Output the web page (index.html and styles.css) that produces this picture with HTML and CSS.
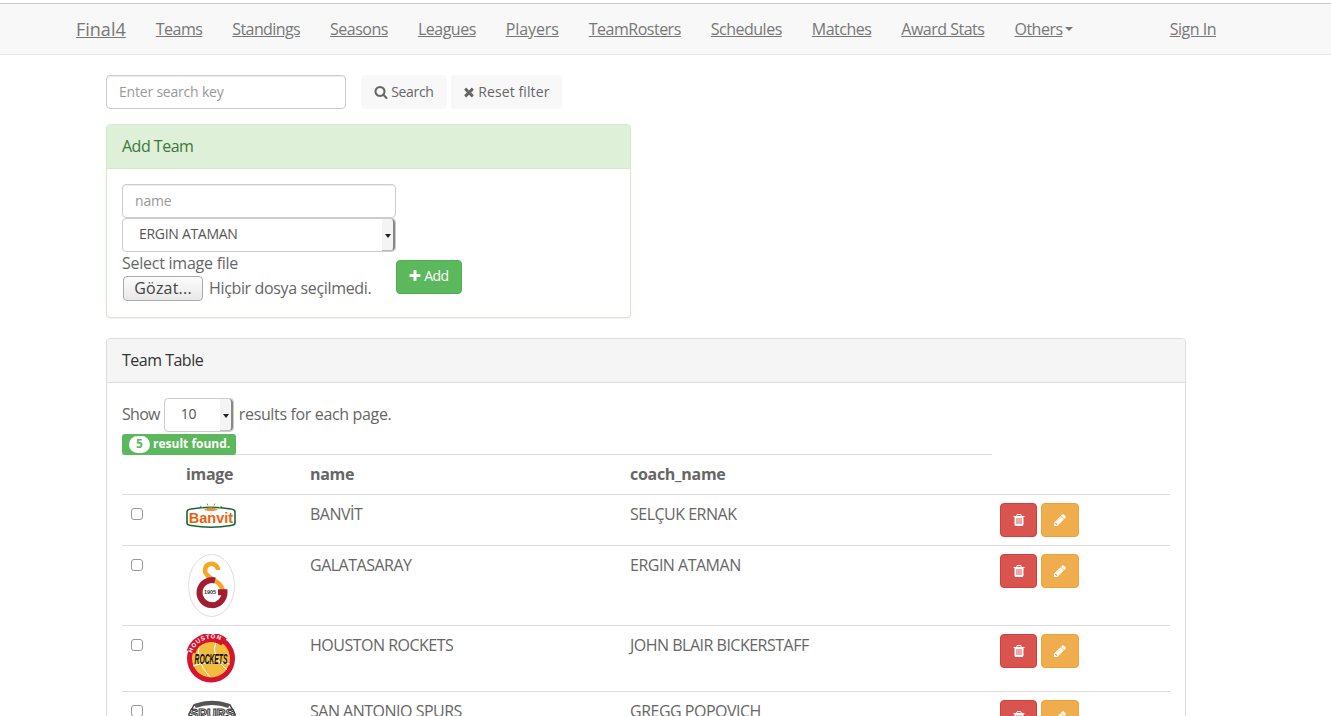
FILE: index.html
```html
<!DOCTYPE html>
<html lang="en">
<head>
    <meta charset="UTF-8">
    <meta name="viewport" content="width=device-width, initial-scale=1.0">
    <title>Final4</title>
    <link rel="stylesheet" href="styles.css">
</head>
<body>
    <svg class="sprite" xmlns="http://www.w3.org/2000/svg">
        <symbol id="i-search" viewBox="0 0 1792 1792"><path d="M1216 832q0-185-131.500-316.500t-316.500-131.500-316.500 131.500-131.500 316.500 131.500 316.500 316.500 131.500 316.500-131.500 131.500-316.500zm512 832q0 52-38 90t-90 38q-54 0-90-38l-343-342q-179 124-399 124-143 0-273.500-55.500t-225-150-150-225-55.500-273.500 55.500-273.500 150-225 225-150 273.500-55.500 273.500 55.500 225 150 150 225 55.500 273.500q0 220-124 399l343 343q37 37 37 90z"/></symbol>
        <symbol id="i-times" viewBox="0 0 1792 1792"><path d="M1490 1322q0 40-28 68l-136 136q-28 28-68 28t-68-28l-294-294-294 294q-28 28-68 28t-68-28l-136-136q-28-28-28-68t28-68l294-294-294-294q-28-28-28-68t28-68l136-136q28-28 68-28t68 28l294 294 294-294q28-28 68-28t68 28l136 136q28 28 28 68t-28 68l-294 294 294 294q28 28 28 68z"/></symbol>
        <symbol id="i-plus" viewBox="0 0 1792 1792"><path d="M1600 736v192q0 40-28 68t-68 28h-416v416q0 40-28 68t-68 28h-192q-40 0-68-28t-28-68v-416h-416q-40 0-68-28t-28-68v-192q0-40 28-68t68-28h416v-416q0-40 28-68t68-28h192q40 0 68 28t28 68v416h416q40 0 68 28t28 68z"/></symbol>
        <symbol id="i-trash" viewBox="0 0 1792 1792"><path d="M704 1376v-704q0-14-9-23t-23-9h-64q-14 0-23 9t-9 23v704q0 14 9 23t23 9h64q14 0 23-9t9-23zm256 0v-704q0-14-9-23t-23-9h-64q-14 0-23 9t-9 23v704q0 14 9 23t23 9h64q14 0 23-9t9-23zm256 0v-704q0-14-9-23t-23-9h-64q-14 0-23 9t-9 23v704q0 14 9 23t23 9h64q14 0 23-9t9-23zm-544-992h448l-48-117q-7-9-17-11h-317q-10 2-17 11zm928 32v64q0 14-9 23t-23 9h-96v948q0 83-47 143.500t-113 60.500h-832q-66 0-113-58.500t-47-141.500v-952h-96q-14 0-23-9t-9-23v-64q0-14 9-23t23-9h309l70-167q15-37 54-63t79-26h320q40 0 79 26t54 63l70 167h309q14 0 23 9t9 23z"/></symbol>
        <symbol id="i-pencil" viewBox="0 0 1792 1792"><path d="M491 1536l91-91-235-235-91 91v107h128v128h107zm523-928q0-22-22-22-10 0-17 7l-542 542q-7 7-7 17 0 22 22 22 10 0 17-7l542-542q7-7 7-17zm-54-192l416 416-832 832h-416v-416zm683 96q0 53-37 90l-166 166-416-416 166-165q36-38 90-38 53 0 91 38l235 234q37 39 37 91z"/></symbol>
    </svg>

    <nav class="navbar">
        <a class="brand" href="#">Final4</a>
        <a class="nav-link" href="#">Teams</a>
        <a class="nav-link link-tight" href="#">Standings</a>
        <a class="nav-link" href="#">Seasons</a>
        <a class="nav-link" href="#">Leagues</a>
        <a class="nav-link link-loose" href="#">Players</a>
        <a class="nav-link" href="#">TeamRosters</a>
        <a class="nav-link" href="#">Schedules</a>
        <a class="nav-link" href="#">Matches</a>
        <a class="nav-link" href="#">Award Stats</a>
        <a class="nav-link" href="#">Others</a><span class="caret"></span>
        <a class="nav-link sign-in" href="#">Sign In</a>
    </nav>

    <main class="content">
        <div class="search-row">
            <input class="field search-field" type="text" placeholder="Enter search key">
            <button class="btn btn-light search-btn"><svg class="icon"><use href="#i-search"/></svg> Search</button>
            <button class="btn btn-light reset-btn"><svg class="icon icon-times"><use href="#i-times"/></svg> Reset filter</button>
        </div>

        <section class="panel panel-add">
            <div class="panel-heading">Add Team</div>
            <div class="panel-body add-form">
                <div class="add-fields">
                    <input class="field" type="text" placeholder="name">
                    <div class="select-box coach-select">ERGIN ATAMAN<span class="select-arrow"></span></div>
                    <label class="file-label">Select image file</label>
                    <div class="file-row">
                        <button class="file-btn">Gözat...</button>
                        <span class="file-name">Hiçbir dosya seçilmedi.</span>
                    </div>
                </div>
                <button class="btn btn-success add-btn"><svg class="icon icon-plus"><use href="#i-plus"/></svg> Add</button>
            </div>
        </section>

        <section class="panel panel-table">
            <div class="panel-heading">Team Table</div>
            <div class="panel-body">
                <div class="show-row">
                    <span>Show</span>
                    <div class="select-box page-select">10<span class="select-arrow"></span></div>
                    <span>results for each page.</span>
                </div>
                <div class="result-badge"><span class="result-count">5</span><span class="result-text">result found.</span></div>
                <table class="team-table">
                    <colgroup>
                        <col class="col-check">
                        <col class="col-image">
                        <col class="col-name">
                        <col class="col-coach">
                        <col class="col-actions">
                    </colgroup>
                    <thead>
                        <tr>
                            <th></th>
                            <th>image</th>
                            <th>name</th>
                            <th>coach_name</th>
                            <th class="no-line"></th>
                        </tr>
                    </thead>
                    <tbody>
                        <tr>
                            <td><input class="check" type="checkbox"></td>
                            <td>
                                <svg class="logo" width="50" height="26" viewBox="0 0 50 26">
                                    <path d="M1 9Q1 6.500 5 6Q25 2.500 45 6Q49 6.500 49 9V20Q49 22 45 22.500Q25 26 5 22.500Q1 22 1 20Z" fill="#fff" stroke="#17663a" stroke-width="1.600"/>
                                    <path d="M18 7Q25 1.500 32 7Q25 9 18 7Z" fill="#ee8a3c"/>
                                    <path d="M14 3l3 2M21 0.500l1 2M29 0.500l-1 2M36 3l-3 2" stroke="#6aa84f" stroke-width="1"/>
                                    <text x="25" y="20" text-anchor="middle" class="logo-banvit">Banvit</text>
                                </svg>
                            </td>
                            <td>BANVİT</td>
                            <td>SELÇUK ERNAK</td>
                            <td class="actions">
                                <button class="btn btn-danger square"><svg class="icon"><use href="#i-trash"/></svg></button>
                                <button class="btn btn-warning square"><svg class="icon"><use href="#i-pencil"/></svg></button>
                            </td>
                        </tr>
                        <tr>
                            <td><input class="check" type="checkbox"></td>
                            <td>
                                <svg class="logo logo-gs" width="47" height="63" viewBox="0 0 47 63">
                                    <ellipse cx="23.500" cy="31.500" rx="23" ry="31" fill="#fff" stroke="#ddd"/>
                                    <path d="M30 16A6.500 6.500 0 1 0 19 21C23 26 33 27 35 37" fill="none" stroke="#f5a623" stroke-width="4.500"/>
                                    <path d="M27 26.500A12.500 12.500 0 1 0 36.500 38.200H30" fill="none" stroke="#a31d33" stroke-width="6"/>
                                    <text x="22" y="40" text-anchor="middle" class="logo-year">1905</text>
                                </svg>
                            </td>
                            <td>GALATASARAY</td>
                            <td>ERGIN ATAMAN</td>
                            <td class="actions">
                                <button class="btn btn-danger square"><svg class="icon"><use href="#i-trash"/></svg></button>
                                <button class="btn btn-warning square"><svg class="icon"><use href="#i-pencil"/></svg></button>
                            </td>
                        </tr>
                        <tr>
                            <td><input class="check" type="checkbox"></td>
                            <td>
                                <svg class="logo" width="50" height="49" viewBox="0 0 50 49">
                                    <circle cx="25" cy="24.500" r="24" fill="#d7132f"/>
                                    <circle cx="25" cy="24.500" r="19" fill="#f2bd3e"/>
                                    <path d="M7 32Q22 26 44 30M14 9Q8 26 24 43M30 8Q24 22 41 36" fill="none" stroke="#fff" stroke-width="1"/>
                                    <path d="M5 18A21 21 0 0 1 38 8" fill="none" stroke="#d7132f" stroke-width="9"/>
                                    <path id="rockets-arc" d="M6 19A21 21 0 0 1 39 9" fill="none"/>
                                    <text class="logo-houston"><textPath href="#rockets-arc">HOUSTON</textPath></text>
                                    <text transform="translate(25 30) scale(0.75 1.6)" text-anchor="middle" class="logo-rockets">ROCKETS</text>
                                </svg>
                            </td>
                            <td>HOUSTON ROCKETS</td>
                            <td>JOHN BLAIR BICKERSTAFF</td>
                            <td class="actions">
                                <button class="btn btn-danger square"><svg class="icon"><use href="#i-trash"/></svg></button>
                                <button class="btn btn-warning square"><svg class="icon"><use href="#i-pencil"/></svg></button>
                            </td>
                        </tr>
                        <tr>
                            <td><input class="check" type="checkbox"></td>
                            <td>
                                <svg class="logo logo-spurs-mark" width="48" height="40" viewBox="0 0 48 40">
                                    <path d="M1 14L6 5Q24 -2 42 5L47 14V26L42 35H6L1 26Z" fill="#fff" stroke="#3c3c3c" stroke-width="1.500"/>
                                    <path d="M7 6Q24 0 41 6" fill="none" stroke="#555" stroke-width="4"/>
                                    <text x="24" y="18" text-anchor="middle" class="logo-spurs">SPURS</text>
                                </svg>
                            </td>
                            <td>SAN ANTONIO SPURS</td>
                            <td>GREGG POPOVICH</td>
                            <td class="actions">
                                <button class="btn btn-danger square"><svg class="icon"><use href="#i-trash"/></svg></button>
                                <button class="btn btn-warning square"><svg class="icon"><use href="#i-pencil"/></svg></button>
                            </td>
                        </tr>
                    </tbody>
                </table>
            </div>
        </section>
    </main>
</body>
</html>
```

FILE: styles.css
```css
html {
    overflow: hidden;
}

body {
    margin: 0;
    padding-top: 3px;
    font-family: "Open Sans", "Noto Sans", sans-serif;
    font-size: 16px;
    line-height: 23px;
    letter-spacing: -0.5px;
    color: #666;
    background-color: #fff;
}

.sprite {
    display: none;
}

.icon {
    width: 14px;
    height: 14px;
    fill: currentColor;
    vertical-align: -2px;
}

.icon-times {
    margin: 0 -1.500px;
}

.icon-plus {
    margin: 0 -1px;
}

/* navbar */
.navbar {
    display: flex;
    align-items: center;
    height: 50px;
    padding-left: 76px;
    padding-right: 115px;
    background-color: #f8f8f8;
    border-top: 1px solid #c8c8c4;
    border-bottom: 1px solid #e7e7e7;
}

.navbar a {
    color: #777;
    text-decoration: underline;
}

.brand {
    font-size: 18px;
    letter-spacing: 0;
    margin-right: 30px;
}

.nav-link {
    margin-right: 30px;
    letter-spacing: -0.5px;
}

.link-tight {
    letter-spacing: -0.6px;
}

.link-loose {
    letter-spacing: -0.1px;
}

.caret {
    width: 0;
    height: 0;
    margin-left: -28px;
    border-top: 4px solid #777;
    border-left: 4px solid transparent;
    border-right: 4px solid transparent;
}

.sign-in {
    margin-left: auto;
    margin-right: 0;
}

/* page content */
.content {
    margin: 20px 145px 0 106px;
}

.search-row {
    display: flex;
    margin-bottom: 15px;
}

.field {
    display: block;
    box-sizing: border-box;
    width: 274px;
    height: 34px;
    padding: 5px 12px 7px;
    font-family: inherit;
    font-size: 14px;
    letter-spacing: -0.2px;
    color: #555;
    background-color: #fff;
    border: 1px solid #ccc;
    border-radius: 4px;
    box-shadow: inset 0 1px 1px rgba(0, 0, 0, 0.075);
}

.field::placeholder {
    color: #999;
}

.search-field {
    width: 240px;
    margin-right: 15px;
}

.btn {
    box-sizing: border-box;
    height: 34px;
    padding: 6px 12px;
    font-family: inherit;
    font-size: 14px;
    line-height: 20px;
    letter-spacing: -0.2px;
    border: 1px solid transparent;
    border-radius: 4px;
    white-space: nowrap;
}

.btn-light {
    background-color: #f8f8f8;
    color: #666;
}

.search-btn {
    margin-right: 4px;
    letter-spacing: -0.35px;
}

.reset-btn {
    letter-spacing: 0.1px;
}

.btn-success {
    background-color: #5cb85c;
    border-color: #4cae4c;
    color: #fff;
}

.add-btn {
    margin-top: 76px;
    padding: 5px 12px 7px;
    letter-spacing: -0.5px;
}

.btn-danger {
    width: 37px;
    background-color: #d9534f;
    border-color: #d43f3a;
    color: #fff;
}

.btn-warning {
    width: 38px;
    background-color: #f0ad4e;
    border-color: #eea236;
    color: #fff;
}

.square {
    padding: 0;
}

/* panels */
.panel {
    background-color: #fff;
    border: 1px solid #ddd;
    border-radius: 4px;
    box-shadow: 0 1px 1px rgba(0, 0, 0, 0.05);
}

.panel-heading {
    height: 44px;
    box-sizing: border-box;
    padding: 10px 15px;
    color: #333;
    background-color: #f5f5f5;
    border-bottom: 1px solid #ddd;
    border-radius: 3px 3px 0 0;
}

.panel-body {
    padding: 15px;
}

.panel-add {
    width: 523px;
    margin-bottom: 20px;
    border-color: #d6e9c6;
}

.panel-add .panel-heading {
    color: #3c763d;
    background-color: #dff0d8;
    border-color: #d6e9c6;
}

.add-form {
    display: flex;
    align-items: flex-start;
    height: 148px;
    box-sizing: border-box;
}

.add-fields {
    width: 274px;
}

.select-box {
    position: relative;
    box-sizing: border-box;
    height: 34px;
    font-size: 14px;
    line-height: 30px;
    letter-spacing: -0.3px;
    color: #555;
    background-color: #fff;
    border: 1px solid #ccc;
    border-radius: 4px;
}

.coach-select {
    padding-left: 16px;
}

.page-select {
    width: 70px;
    padding-left: 16px;
}

.select-arrow {
    position: absolute;
    top: 0;
    right: 0;
    bottom: 0;
    width: 11px;
    background-color: #f4f4f4;
    border-right: 2px solid #888;
    border-bottom: 1px solid #bbb;
    border-radius: 0 4px 4px 0;
}

.select-arrow::after {
    content: "";
    position: absolute;
    top: 15px;
    left: 3px;
    border-top: 4px solid #222;
    border-left: 3px solid transparent;
    border-right: 3px solid transparent;
}

.file-label {
    display: block;
    letter-spacing: -0.25px;
}

.file-row {
    display: flex;
    align-items: center;
    gap: 6px;
    height: 26px;
    margin-left: 1px;
}

.file-name {
    letter-spacing: -0.35px;
}

.file-btn {
    width: 80px;
    height: 25px;
    padding: 0;
    font-family: inherit;
    font-size: 16px;
    letter-spacing: 0.2px;
    color: #444;
    background: linear-gradient(#fcfcfc, #e8e8e8);
    border: 1px solid #aaa;
    border-radius: 4px;
}

/* team table */
.show-row {
    display: flex;
    align-items: center;
    gap: 4px;
}

.show-row > span {
    padding-bottom: 2px;
    letter-spacing: -0.35px;
}

.show-row > span:first-child {
    letter-spacing: -0.7px;
}

.page-select + span {
    margin-left: 1px;
}

.result-badge {
    display: flex;
    align-items: center;
    position: relative;
    width: 114px;
    height: 21px;
    box-sizing: border-box;
    margin-top: 2px;
    margin-bottom: -1px;
    padding-left: 7px;
    font-size: 12px;
    font-weight: 700;
    line-height: 16px;
    letter-spacing: 0;
    color: #fff;
    background-color: #5cb85c;
    border-radius: 3px;
}

.result-count {
    width: 21px;
    height: 17px;
    margin-right: 3px;
    color: #5cb85c;
    text-align: center;
    background-color: #fff;
    border-radius: 9px;
}

.result-text {
    margin-bottom: 2px;
}

.team-table {
    width: 1048px;
    table-layout: fixed;
    border-collapse: collapse;
}

.col-check { width: 56px; }
.col-image { width: 124px; }
.col-name { width: 320px; }
.col-coach { width: 370px; }
.col-actions { width: 178px; }

.team-table th {
    padding: 8px;
    text-align: left;
    letter-spacing: -0.3px;
    border-top: 1px solid #ddd;
    border-bottom: 1px solid #ddd;
}

.team-table th.no-line {
    border-top: 0;
}

.team-table td {
    padding: 8px;
    vertical-align: top;
    border-top: 1px solid #ddd;
}

.actions {
    white-space: nowrap;
}

.check {
    appearance: none;
    display: block;
    box-sizing: border-box;
    width: 12px;
    height: 12px;
    margin: 5px 0 0 1px;
    background-color: #fff;
    border: 1px solid #999;
    border-radius: 3px;
}

.logo {
    display: block;
}

.logo-gs,
.logo-spurs-mark {
    margin-left: 2px;
}

.logo-banvit {
    font-family: "Liberation Sans", sans-serif;
    font-size: 14.500px;
    font-weight: 700;
    letter-spacing: 0;
    fill: #e8620e;
}

.logo-year {
    font-family: "Liberation Sans", sans-serif;
    font-size: 5.500px;
    font-weight: 700;
    letter-spacing: 0;
    fill: #333;
}

.logo-houston {
    font-family: "Liberation Sans", sans-serif;
    font-size: 6px;
    font-weight: 700;
    letter-spacing: 0.8px;
    fill: #fff;
}

.logo-rockets {
    font-family: "Liberation Sans", sans-serif;
    font-size: 9px;
    font-weight: 700;
    font-style: italic;
    letter-spacing: 0;
    fill: #111;
}

.logo-spurs {
    font-family: "Liberation Sans", sans-serif;
    font-size: 13px;
    font-weight: 700;
    letter-spacing: 0;
    fill: #fff;
    stroke: #333;
    stroke-width: 1;
}
```
